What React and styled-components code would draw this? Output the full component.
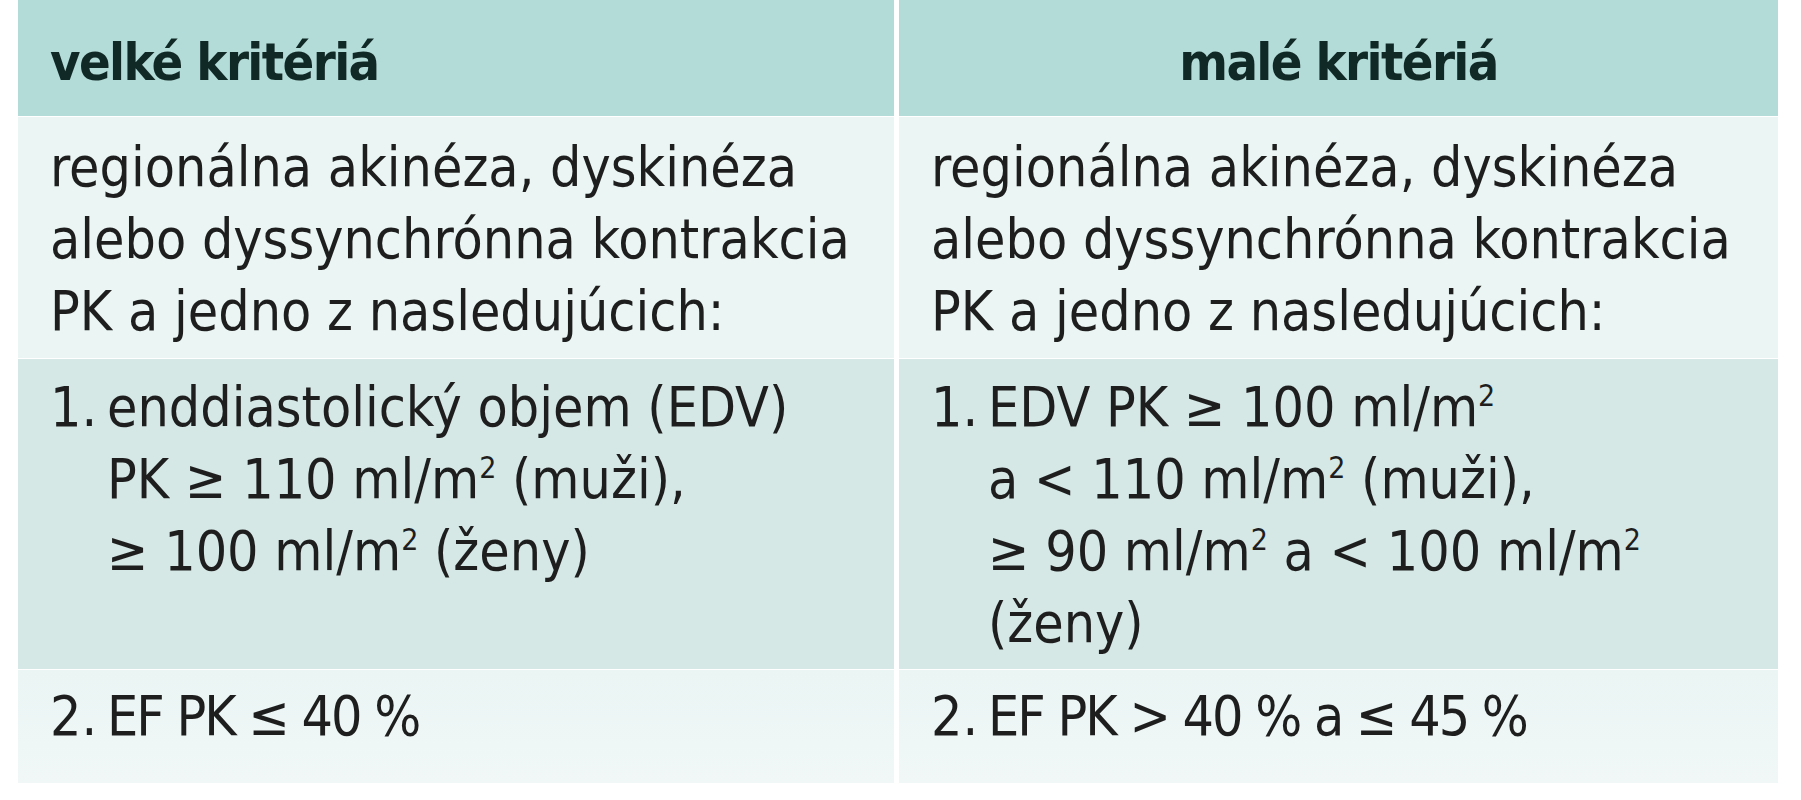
import React from "react";
import styled, { createGlobalStyle } from "styled-components";

const GlobalStyle = createGlobalStyle`
  html, body {
    margin: 0;
    padding: 0;
    background: #ffffff;
  }
  body {
    font-family: "DejaVu Sans Condensed", "DejaVu Sans", sans-serif;
    font-stretch: condensed;
    color: #1e1e1e;
  }
`;

const Page = styled.div`
  width: 1801px;
  height: 800px;
  padding: 0 23px 0 18px;
  box-sizing: border-box;
`;

const Table = styled.div`
  display: grid;
  grid-template-columns: 876px 879px;
  column-gap: 5px;
  row-gap: 1px;
  width: 1760px;
`;

const HeadCell = styled.div`
  background: #b3dbd7;
  height: 116px;
  box-sizing: border-box;
  padding: 26px 32px 0;
  font-weight: bold;
  font-size: 52px;
  letter-spacing: -1.6px;
  line-height: 72px;
  color: #102826;
  text-align: ${props => (props.center ? "center" : "left")};
`;

const Cell = styled.div`
  background: ${props => (props.tone === "dark" ? "#d5e8e6" : "#eaf5f4")};
  background-image: ${props =>
    props.fade ? "linear-gradient(to bottom, #eaf5f4 0%, #f1f7f7 100%)" : "none"};
  box-sizing: border-box;
  padding: ${props => props.pad || "14px 32px 11px"};
  font-size: 55px;
  line-height: 72px;
  min-height: ${props => props.minH || 0}px;
`;

const Item = styled.div`
  display: flex;
`;

const Num = styled.span`
  flex: 0 0 57px;
`;

const Tight = styled.span`
  letter-spacing: -2px;
`;

const Sup = styled.sup`
  font-size: 30px;
  line-height: 0;
  vertical-align: 20px;
`;

function M2() {
    return <>ml/m<Sup>2</Sup></>;
}

function App() {
    return (
        <Page>
            <GlobalStyle />
            <Table>
                <HeadCell>velké kritériá</HeadCell>
                <HeadCell center>malé kritériá</HeadCell>

                <Cell minH={241}>
                    regionálna akinéza, dyskinéza<br />
                    alebo dyssynchrónna kontrakcia<br />
                    PK a jedno z nasledujúcich:
                </Cell>
                <Cell minH={241}>
                    regionálna akinéza, dyskinéza<br />
                    alebo dyssynchrónna kontrakcia<br />
                    PK a jedno z nasledujúcich:
                </Cell>

                <Cell tone="dark" pad="12px 32px 10px" minH={309}>
                    <Item>
                        <Num>1.</Num>
                        <span>
                            enddiastolický objem (EDV)<br />
                            PK ≥ 110 <M2 /> (muži),<br />
                            ≥ 100 <M2 /> (ženy)
                        </span>
                    </Item>
                </Cell>
                <Cell tone="dark" pad="12px 32px 10px" minH={309}>
                    <Item>
                        <Num>1.</Num>
                        <span>
                            EDV PK ≥ 100 <M2 /><br />
                            a &lt; 110 <M2 /> (muži),<br />
                            ≥ 90 <M2 /> a &lt; 100 <M2 /><br />
                            (ženy)
                        </span>
                    </Item>
                </Cell>

                <Cell fade pad="10px 32px 31px" minH={113}>
                    <Item>
                        <Num>2.</Num>
                        <Tight>EF PK ≤ 40 %</Tight>
                    </Item>
                </Cell>
                <Cell fade pad="10px 32px 31px" minH={113}>
                    <Item>
                        <Num>2.</Num>
                        <Tight>EF PK &gt; 40 % a ≤ 45 %</Tight>
                    </Item>
                </Cell>
            </Table>
        </Page>
    );
}

export default App;
